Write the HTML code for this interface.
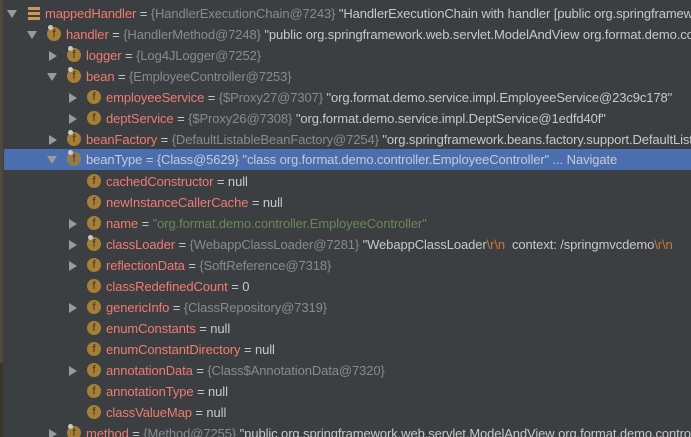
<!DOCTYPE html>
<html><head><meta charset="utf-8"><style>
html,body{margin:0;padding:0}
body{width:691px;height:437px;background:#3c3f41;position:relative;overflow:hidden;font-family:"Liberation Sans","Noto Sans CJK SC",sans-serif;font-size:13px}
.edge{position:absolute;left:0;top:0;width:3px;height:363px;background:#4d4a3c}
.edge2{position:absolute;left:0;top:363px;width:3px;height:74px;background:#38352b}
.row{position:absolute;left:4px;width:687px;height:21px;line-height:21px;white-space:nowrap;color:#c8c8c8;overflow:hidden}
.sel{background:#4b6eaf}
.t{position:absolute;top:0;white-space:nowrap;letter-spacing:-0.1px}
.n{color:#f07b72}
.g{color:#8a8a8a}
.gr{color:#6a8759}
.o{color:#cc7832}
.arr{position:absolute;top:0;width:0;height:0}
.ad{top:7px;border-left:5px solid transparent;border-right:5px solid transparent;border-top:8px solid #9a9a9a}
.ar{top:6px;border-top:5px solid transparent;border-bottom:5px solid transparent;border-left:8px solid #9a9a9a}
.f{position:absolute;top:3px;width:14px;height:14px;border-radius:50%;background:#a67f36;color:#3c3528;font-size:11px;line-height:14px;text-align:center}
.pin{position:absolute;top:1px;width:5px;height:5px;border-radius:50%;background:#c9c9c9}
.hb{position:absolute;left:24px;top:4px;width:12px;height:13px;background:linear-gradient(#c99a54 0 3px,transparent 3px 5px,#c99a54 5px 8px,transparent 8px 10px,#c99a54 10px 13px)}
</style></head><body>
<div class="edge"></div><div class="edge2"></div>

<div class="row" style="top:3px"><div class="arr ad" style="left:3px"></div><div class="hb"></div><span class="t" style="left:41px"><span class="n">mappedHandler</span> = <span class="g">{HandlerExecutionChain@7243}</span> "HandlerExecutionChain with handler [public org.springframework.web.servlet</span></div>

<div class="row" style="top:24px"><div class="arr ad" style="left:23px"></div><div class="f" style="left:43px">f</div><div class="pin" style="left:44px"></div><span class="t" style="left:62px"><span class="n">handler</span> = <span class="g">{HandlerMethod@7248}</span> "public org.springframework.web.servlet.ModelAndView org.format.demo.controller</span></div>

<div class="row" style="top:45px"><div class="arr ar" style="left:45px"></div><div class="f" style="left:63px">f</div><div class="pin" style="left:64px"></div><span class="t" style="left:82px"><span class="n">logger</span> = <span class="g">{Log4JLogger@7252}</span></span></div>

<div class="row" style="top:66px"><div class="arr ad" style="left:43px"></div><div class="f" style="left:63px">f</div><div class="pin" style="left:64px"></div><span class="t" style="left:82px"><span class="n">bean</span> = <span class="g">{EmployeeController@7253}</span></span></div>

<div class="row" style="top:87px"><div class="arr ar" style="left:65px"></div><div class="f" style="left:83px">f</div><span class="t" style="left:102px"><span class="n">employeeService</span> = <span class="g">{$Proxy27@7307}</span> "org.format.demo.service.impl.EmployeeService@23c9c178"</span></div>

<div class="row" style="top:108px"><div class="arr ar" style="left:65px"></div><div class="f" style="left:83px">f</div><span class="t" style="left:102px"><span class="n">deptService</span> = <span class="g">{$Proxy26@7308}</span> "org.format.demo.service.impl.DeptService@1edfd40f"</span></div>

<div class="row" style="top:129px"><div class="arr ar" style="left:45px"></div><div class="f" style="left:63px">f</div><div class="pin" style="left:64px"></div><span class="t" style="left:82px"><span class="n">beanFactory</span> = <span class="g">{DefaultListableBeanFactory@7254}</span> "org.springframework.beans.factory.support.DefaultListableBeanFactory</span></div>

<div class="row sel" style="top:149px;height:21px"><div class="arr ad" style="left:43px;top:7px"></div><div class="f" style="left:63px;opacity:.85">f</div><div class="pin" style="left:64px"></div><span class="t" style="left:82px;color:#c5cbd6">beanType = {Class@5629} "class org.format.demo.controller.EmployeeController" ... Navigate</span></div>

<div class="row" style="top:171px"><div class="f" style="left:83px">f</div><span class="t" style="left:102px"><span class="n">cachedConstructor</span> = null</span></div>
<div class="row" style="top:192px"><div class="f" style="left:83px">f</div><span class="t" style="left:102px"><span class="n">newInstanceCallerCache</span> = null</span></div>
<div class="row" style="top:213px"><div class="arr ar" style="left:65px"></div><div class="f" style="left:83px">f</div><span class="t" style="left:102px"><span class="n">name</span> = <span class="gr">"org.format.demo.controller.EmployeeController"</span></span></div>
<div class="row" style="top:234px"><div class="arr ar" style="left:65px"></div><div class="f" style="left:83px">f</div><div class="pin" style="left:84px"></div><span class="t" style="left:102px"><span class="n">classLoader</span> = <span class="g">{WebappClassLoader@7281}</span> "WebappClassLoader<span class="o">\r\n</span>&nbsp; context: /springmvcdemo<span class="o">\r\n</span></span></div>
<div class="row" style="top:255px"><div class="arr ar" style="left:65px"></div><div class="f" style="left:83px">f</div><span class="t" style="left:102px"><span class="n">reflectionData</span> = <span class="g">{SoftReference@7318}</span></span></div>
<div class="row" style="top:276px"><div class="f" style="left:83px">f</div><span class="t" style="left:102px"><span class="n">classRedefinedCount</span> = 0</span></div>
<div class="row" style="top:297px"><div class="arr ar" style="left:65px"></div><div class="f" style="left:83px">f</div><span class="t" style="left:102px"><span class="n">genericInfo</span> = <span class="g">{ClassRepository@7319}</span></span></div>
<div class="row" style="top:318px"><div class="f" style="left:83px">f</div><span class="t" style="left:102px"><span class="n">enumConstants</span> = null</span></div>
<div class="row" style="top:339px"><div class="f" style="left:83px">f</div><span class="t" style="left:102px"><span class="n">enumConstantDirectory</span> = null</span></div>
<div class="row" style="top:360px"><div class="arr ar" style="left:65px"></div><div class="f" style="left:83px">f</div><span class="t" style="left:102px"><span class="n">annotationData</span> = <span class="g">{Class$AnnotationData@7320}</span></span></div>
<div class="row" style="top:381px"><div class="f" style="left:83px">f</div><span class="t" style="left:102px"><span class="n">annotationType</span> = null</span></div>
<div class="row" style="top:402px"><div class="f" style="left:83px">f</div><span class="t" style="left:102px"><span class="n">classValueMap</span> = null</span></div>
<div class="row" style="top:423px;height:14px"><div class="arr ar" style="left:45px"></div><div class="f" style="left:63px">f</div><div class="pin" style="left:64px"></div><span class="t" style="left:82px"><span class="n">method</span> = <span class="g">{Method@7255}</span> "public org.springframework.web.servlet.ModelAndView org.format.demo.controller</span></div>
</body></html>
